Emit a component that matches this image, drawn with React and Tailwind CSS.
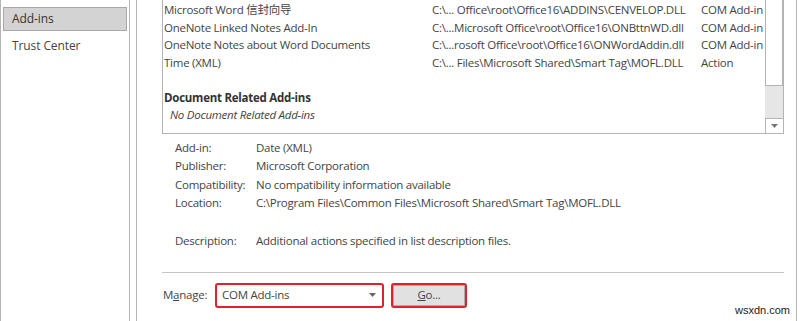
import React from "react";

const rows = [
  ["Microsoft Word 信封向导", "C:\\... Office\\root\\Office16\\ADDINS\\CENVELOP.DLL", "COM Add-in"],
  ["OneNote Linked Notes Add-In", "C:\\...Microsoft Office\\root\\Office16\\ONBttnWD.dll", "COM Add-in"],
  ["OneNote Notes about Word Documents", "C:\\...rosoft Office\\root\\Office16\\ONWordAddin.dll", "COM Add-in"],
  ["Time (XML)", "C:\\... Files\\Microsoft Shared\\Smart Tag\\MOFL.DLL", "Action"],
];

const details = [
  ["Add-in:", "Date (XML)"],
  ["Publisher:", "Microsoft Corporation"],
  ["Compatibility:", "No compatibility information available"],
  ["Location:", "C:\\Program Files\\Common Files\\Microsoft Shared\\Smart Tag\\MOFL.DLL"],
  ["", ""],
  ["Description:", "Additional actions specified in list description files."],
];

export default function App() {
  return (
    <div className="w-[800px] h-[321px] bg-white flex overflow-hidden font-['Open_Sans','Noto_Sans_CJK_SC',sans-serif] text-[11.5px] tracking-[-0.25px] text-[#444]">
      {/* Sidebar */}
      <div className="w-[130px] h-full border-l border-r border-[#b4b4b4] flex flex-col pt-[7px] px-[2px] text-[12px] tracking-[-0.1px]">
        <div className="h-[24px] bg-[#d3d3d3] border border-[#a8a8a8] flex items-center pl-[8px] text-[#333]">Add-ins</div>
        <div className="h-[28px] flex items-center pl-[9px] mt-[1px]">Trust Center</div>
      </div>
      <div className="w-[6px]" />
      {/* Main panel */}
      <div className="w-[661px] h-full border-l border-r border-[#b4b4b4] flex flex-col pl-[25px] pr-[12px]">
        {/* List box */}
        <div className="h-[134px] border-l border-r border-b border-[#b4b4b4] flex">
          <div className="flex-1 flex flex-col pt-[1px] pl-[1px]">
            {rows.map((r) => (
              <div key={r[0]} className="h-[17.5px] flex items-center whitespace-nowrap">
                <div className="w-[268px]">{r[0]}</div>
                <div className="w-[269px]">{r[1]}</div>
                <div>{r[2]}</div>
              </div>
            ))}
            <div className="h-[18px]" />
            <div className="h-[17px] flex items-center font-bold text-[#333]">Document Related Add-ins</div>
            <div className="h-[17px] flex items-center italic pl-[6px]">No Document Related Add-ins</div>
          </div>
          {/* Scrollbar */}
          <div className="w-[18px] flex flex-col">
            <div className="h-[86px] border-l border-r border-b border-[#b4b4b4] bg-white" />
            <div className="flex-1 bg-[#e6e6e6]" />
            <div className="h-[15px] border-l border-t border-[#b4b4b4] bg-white flex items-center justify-center">
              <svg width="7" height="4" viewBox="0 0 7 4"><path d="M0 0 H7 L3.5 4 Z" fill="#777" /></svg>
            </div>
          </div>
        </div>
        {/* Details */}
        <div className="flex flex-col pt-[4px] pl-[13px]">
          {details.map((d, i) => (
            <div key={i} className="h-[18.6px] flex items-center whitespace-nowrap">
              <div className="w-[81px]">{d[0]}</div>
              <div>{d[1]}</div>
            </div>
          ))}
        </div>
        <div className="mt-[22px] h-[1px] bg-[#c4c4c4]" />
        {/* Manage row */}
        <div className="flex items-center mt-[10px]">
          <div className="w-[53px] pl-[1px]">M<span className="underline">a</span>nage:</div>
          <div className="w-[169px] h-[25px] border-2 border-[#e0202a] rounded-[3px] flex items-center pl-[5px] pr-[6px] justify-between">
            <span>COM Add-ins</span>
            <svg width="7" height="4" viewBox="0 0 7 4"><path d="M0 0 H7 L3.5 4 Z" fill="#666" /></svg>
          </div>
          <div className="ml-[7px] w-[76px] h-[25px] border-2 border-[#e0202a] rounded-[3px] bg-[#e1e1e1] flex items-center justify-center shadow-[inset_0_0_0_1px_#adadad]">
            <span><span className="underline">G</span>o...</span>
          </div>
          <div className="flex-1" />
        </div>
        <div className="flex justify-end mt-[-3px]">
          <span className="font-['Liberation_Sans',sans-serif] tracking-normal text-[11px] text-[#222] leading-none mr-[-6px]">wsxdn.com</span>
        </div>
      </div>
    </div>
  );
}
